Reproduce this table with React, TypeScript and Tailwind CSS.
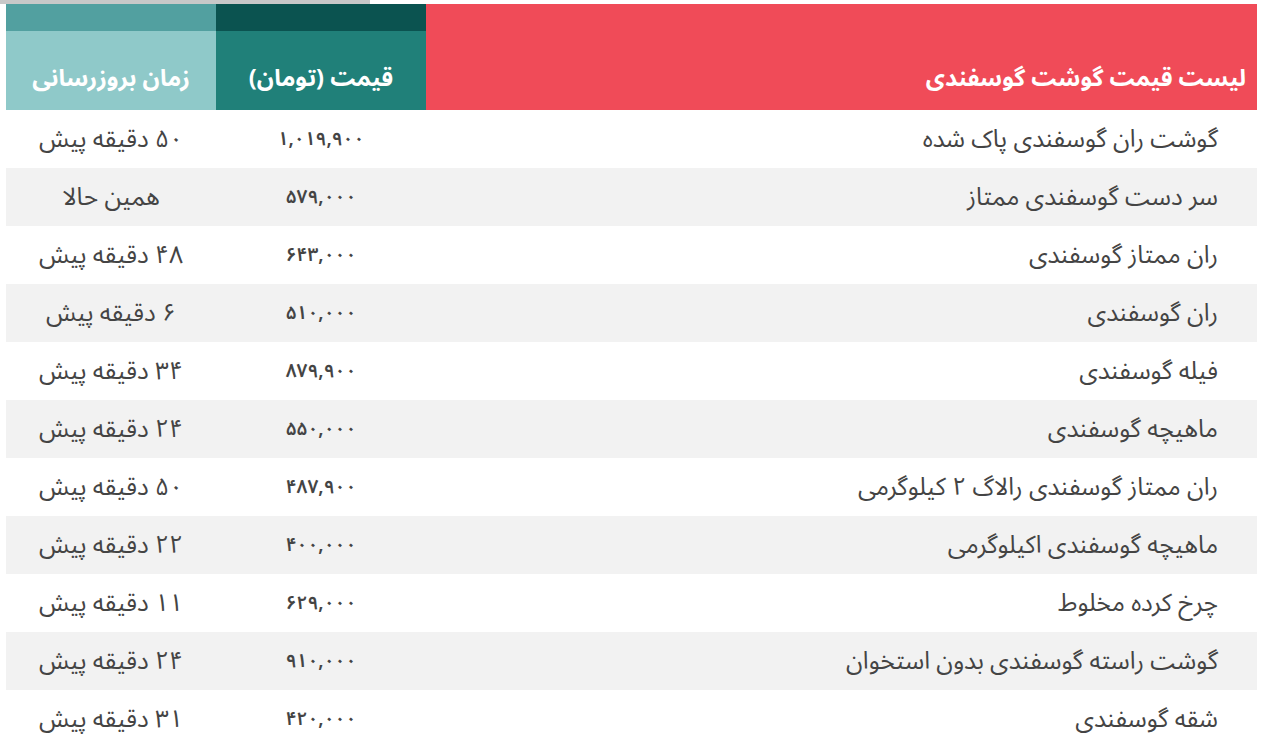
import React from 'react';

const rows: [string, string, string][] = [
  ['گوشت ران گوسفندی پاک شده', '۱,۰۱۹,۹۰۰', '۵۰ دقیقه پیش'],
  ['سر دست گوسفندی ممتاز', '۵۷۹,۰۰۰', 'همین حالا'],
  ['ران ممتاز گوسفندی', '۶۴۳,۰۰۰', '۴۸ دقیقه پیش'],
  ['ران گوسفندی', '۵۱۰,۰۰۰', '۶ دقیقه پیش'],
  ['فیله گوسفندی', '۸۷۹,۹۰۰', '۳۴ دقیقه پیش'],
  ['ماهیچه گوسفندی', '۵۵۰,۰۰۰', '۲۴ دقیقه پیش'],
  ['ران ممتاز گوسفندی رالاگ ۲ کیلوگرمی', '۴۸۷,۹۰۰', '۵۰ دقیقه پیش'],
  ['ماهیچه گوسفندی اکیلوگرمی', '۴۰۰,۰۰۰', '۲۲ دقیقه پیش'],
  ['چرخ کرده مخلوط', '۶۲۹,۰۰۰', '۱۱ دقیقه پیش'],
  ['گوشت راسته گوسفندی بدون استخوان', '۹۱۰,۰۰۰', '۲۴ دقیقه پیش'],
  ['شقه گوسفندی', '۴۲۰,۰۰۰', '۳۱ دقیقه پیش'],
];

export default function App() {
  return (
    <div
      className="bg-white min-h-screen"
      style={{ fontFamily: '"Noto Sans Arabic", "DejaVu Sans", "Noto Sans", sans-serif' }}
    >
      <div className="w-[370px] h-[4px] bg-[#c8c8c8]" />
      <div className="px-[6px]">
        <table dir="rtl" className="w-full border-collapse">
          <thead>
            <tr className="text-white text-[23.5px] font-bold">
              <th className="p-0 bg-[#f04b58]">
                <div className="h-[106px] flex items-end justify-start pr-[11px] pb-[14px]">
                  لیست قیمت گوشت گوسفندی
                </div>
              </th>
              <th className="p-0 w-[210px]">
                <div className="h-[27px] bg-[#0b5350]" />
                <div className="h-[79px] bg-[#208079] flex items-end justify-center pb-[14px]">
                  قیمت (تومان)
                </div>
              </th>
              <th className="p-0 w-[210px]">
                <div className="h-[27px] bg-[#52a0a0]" />
                <div className="h-[79px] bg-[#8fc9c9] flex items-end justify-center pb-[14px]">
                  زمان بروزرسانی
                </div>
              </th>
            </tr>
          </thead>
          <tbody className="text-[#444444] text-[24.5px]">
            {rows.map((r, i) => (
              <tr key={i} className={i % 2 === 1 ? 'bg-[#f2f2f2]' : 'bg-white'}>
                <td className="h-[58px] p-0 text-right pr-[39px]">{r[0]}</td>
                <td className="h-[58px] p-0 text-center text-[19px] font-semibold">{r[1]}</td>
                <td className="h-[58px] p-0 text-center">{r[2]}</td>
              </tr>
            ))}
          </tbody>
        </table>
      </div>
    </div>
  );
}
